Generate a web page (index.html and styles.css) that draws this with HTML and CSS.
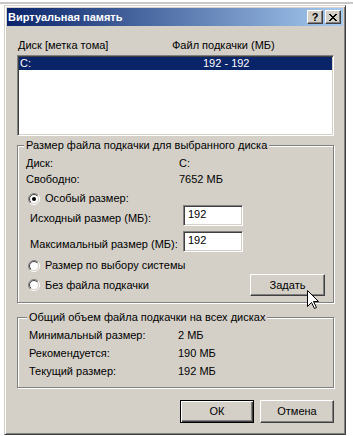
FILE: index.html
```html
<!DOCTYPE html>
<html lang="ru">
<head>
    <meta charset="UTF-8">
    <title>Виртуальная память</title>
    <link rel="stylesheet" href="styles.css">
</head>
<body>

    <svg class="defs" width="0" height="0">
        <defs>
            <linearGradient id="ringOuter" x1="0" y1="0" x2="1" y2="1">
                <stop offset="0.5" stop-color="#808080"/>
                <stop offset="0.5" stop-color="#ffffff"/>
            </linearGradient>
            <linearGradient id="ringInner" x1="0" y1="0" x2="1" y2="1">
                <stop offset="0.5" stop-color="#404040"/>
                <stop offset="0.5" stop-color="#d4d0c8"/>
            </linearGradient>
        </defs>
    </svg>

    <div class="backdrop-line"></div>

    <div class="window">
        <div class="titlebar">
            <span class="title">Виртуальная память</span>
            <div class="caption-buttons">
                <span class="cap-btn">?</span>
                <span class="cap-btn">
                    <svg width="8" height="7" viewBox="0 0 8 7" shape-rendering="crispEdges">
                        <path d="M0 0h2v1H0z M6 0h2v1H6z M1 1h2v1H1z M5 1h2v1H5z M2 2h4v1H2z M3 3h2v1H3z M2 4h4v1H2z M1 5h2v1H1z M5 5h2v1H5z M0 6h2v1H0z M6 6h2v1H6z" fill="#000"/>
                    </svg>
                </span>
            </div>
        </div>

        <div class="client">
            <div class="list-head">
                <span class="col-drive">Диск [метка тома]</span>
                <span>Файл подкачки (МБ)</span>
            </div>
            <div class="listbox">
                <div class="list-row selected">
                    <span class="col-drive">C:</span>
                    <span>192 - 192</span>
                </div>
            </div>

            <!-- selected drive -->
            <fieldset class="group group-drive">
                <legend>Размер файла подкачки для выбранного диска</legend>
                <div class="info-row"><span class="label">Диск:</span><span>C:</span></div>
                <div class="info-row free"><span class="label">Свободно:</span><span>7652 МБ</span></div>
                <div class="radio-row">
                    <svg class="radio" width="12" height="12" viewBox="0 0 12 12">
                        <circle cx="6" cy="6" r="5.5" fill="none" stroke="url(#ringOuter)"/>
                        <circle cx="6" cy="6" r="4.5" fill="#fff" stroke="url(#ringInner)"/>
                        <circle cx="6" cy="6" r="2" fill="#000"/>
                    </svg>
                    <span>Особый размер:</span>
                </div>
                <div class="field-row"><span class="label">Исходный размер (МБ):</span><span class="textbox">192</span></div>
                <div class="field-row max"><span class="label">Максимальный размер (МБ):</span><span class="textbox">192</span></div>
                <div class="radio-row system">
                    <svg class="radio" width="12" height="12" viewBox="0 0 12 12">
                        <circle cx="6" cy="6" r="5.5" fill="none" stroke="url(#ringOuter)"/>
                        <circle cx="6" cy="6" r="4.5" fill="#fff" stroke="url(#ringInner)"/>
                    </svg>
                    <span>Размер по выбору системы</span>
                </div>
                <div class="last-row">
                    <div class="radio-row">
                        <svg class="radio" width="12" height="12" viewBox="0 0 12 12">
                            <circle cx="6" cy="6" r="5.5" fill="none" stroke="url(#ringOuter)"/>
                            <circle cx="6" cy="6" r="4.5" fill="#fff" stroke="url(#ringInner)"/>
                        </svg>
                        <span>Без файла подкачки</span>
                    </div>
                    <span class="btn set">Задать</span>
                </div>
            </fieldset>

            <!-- all drives -->
            <fieldset class="group group-total">
                <legend>Общий объем файла подкачки на всех дисках</legend>
                <div class="total-row"><span class="label">Минимальный размер:</span><span>2 МБ</span></div>
                <div class="total-row"><span class="label">Рекомендуется:</span><span>190 МБ</span></div>
                <div class="total-row"><span class="label">Текущий размер:</span><span>192 МБ</span></div>
            </fieldset>

            <div class="dialog-buttons">
                <span class="btn default">ОК</span>
                <span class="btn">Отмена</span>
            </div>
        </div>

        <svg class="cursor" width="13" height="20" viewBox="0 0 13 20">
            <path d="M0.5 0.5V16.5L4.5 12.5L7.5 18.5L9.5 17.5L6.5 11.5H11.5Z" fill="#fff" stroke="#000" stroke-linejoin="miter"/>
        </svg>
    </div>

</body>
</html>
```

FILE: styles.css
```css
* {
    box-sizing: border-box;
}

body {
    margin: 0;
    width: 353px;
    height: 436px;
    overflow: hidden;
    background: #ffffff;
    color: #000000;
    font-family: "Liberation Sans", Arial, sans-serif;
    font-size: 11px;
    line-height: 13px;
}

.defs {
    position: absolute;
}

.backdrop-line {
    height: 2px;
    margin-top: 2px;
    background: #c8c8c8;
}

/* Classic window frame */
.window {
    position: relative;
    width: 342px;
    height: 430px;
    margin: 1px 0 0 4px;
    padding: 2px;
    background: #d4d0c8;
    border: 1px solid;
    border-color: #d4d0c8 #404040 #404040 #d4d0c8;
    box-shadow: inset 1px 1px #ffffff, inset -1px -1px #808080;
}

.titlebar {
    height: 18px;
    display: flex;
    align-items: center;
    justify-content: space-between;
    padding-left: 1px;
    background: linear-gradient(to right, #0a246a, #a6caf0);
}

.title {
    color: #ffffff;
    font-weight: bold;
}

.caption-buttons {
    display: flex;
    gap: 2px;
    margin-right: 2px;
}

.cap-btn {
    width: 16px;
    height: 14px;
    display: flex;
    align-items: center;
    justify-content: center;
    background: #d4d0c8;
    border: 1px solid;
    border-color: #ffffff #404040 #404040 #ffffff;
    box-shadow: inset -1px -1px #808080;
    font-weight: bold;
    font-size: 11px;
}

.client {
    padding: 13px 9px 0 10px;
}

/* Drive list */
.list-head {
    display: flex;
    height: 13px;
    padding-left: 1px;
}

.list-head .col-drive {
    width: 154px;
}

.listbox {
    height: 81px;
    margin-top: 3px;
    padding: 1px;
    background: #ffffff;
    border: 1px solid;
    border-color: #808080 #ffffff #ffffff #808080;
    box-shadow: inset 1px 1px #404040, inset -1px -1px #d4d0c8;
}

.list-row {
    display: flex;
    height: 13px;
    padding-left: 1px;
}

.list-row .col-drive {
    width: 183px;
}

.list-row.selected {
    background: #0a246a;
    color: #ffffff;
}

/* Group boxes */
.group {
    min-width: 0;
    margin: 3px 0 0;
    border: 1px solid #808080;
    box-shadow: inset 1px 1px #ffffff, 1px 1px #ffffff;
}

.group legend {
    margin-left: -2px;
    padding: 0 2px;
    background: #d4d0c8;
    line-height: 13px;
}

.group-drive {
    padding: 5px 8px 6px 8px;
}

.group-total {
    margin-top: 8px;
    padding: 5px 8px 4px 11px;
}

.info-row {
    display: flex;
    height: 16px;
}

.info-row.free {
    height: 19px;
}

.info-row .label {
    width: 153px;
}

.radio-row {
    display: flex;
    align-items: center;
    gap: 5px;
    height: 13px;
}

.radio {
    margin-left: 2px;
}

.field-row {
    display: flex;
    align-items: flex-end;
    height: 21px;
    padding-left: 4px;
}

.field-row .label {
    width: 153px;
    padding-bottom: 1px;
}

.field-row.max {
    margin-top: 5px;
}

.textbox {
    width: 60px;
    height: 21px;
    padding: 2px 0 0 4px;
    background: #ffffff;
    border: 1px solid;
    border-color: #808080 #ffffff #ffffff #808080;
    box-shadow: inset 1px 1px #404040, inset -1px -1px #d4d0c8;
}

.radio-row.system {
    margin-top: 7px;
}

.last-row {
    display: flex;
    align-items: center;
    justify-content: space-between;
    height: 22px;
    margin-top: 2px;
}

.total-row {
    display: flex;
    height: 18px;
}

.total-row .label {
    width: 149px;
}

/* Buttons */
.btn {
    width: 75px;
    height: 23px;
    display: flex;
    align-items: center;
    justify-content: center;
    background: #d4d0c8;
    border: 1px solid;
    border-color: #ffffff #404040 #404040 #ffffff;
    box-shadow: inset -1px -1px #808080;
}

.btn.set {
    height: 22px;
}

.btn.default {
    border-color: #000000;
    box-shadow: inset 1px 1px #ffffff, inset -1px -1px #404040, inset -2px -2px #808080;
}

.dialog-buttons {
    display: flex;
    gap: 6px;
    margin-top: 12px;
    padding-left: 163px;
}

.cursor {
    position: absolute;
    left: 302px;
    top: 284px;
}
```
